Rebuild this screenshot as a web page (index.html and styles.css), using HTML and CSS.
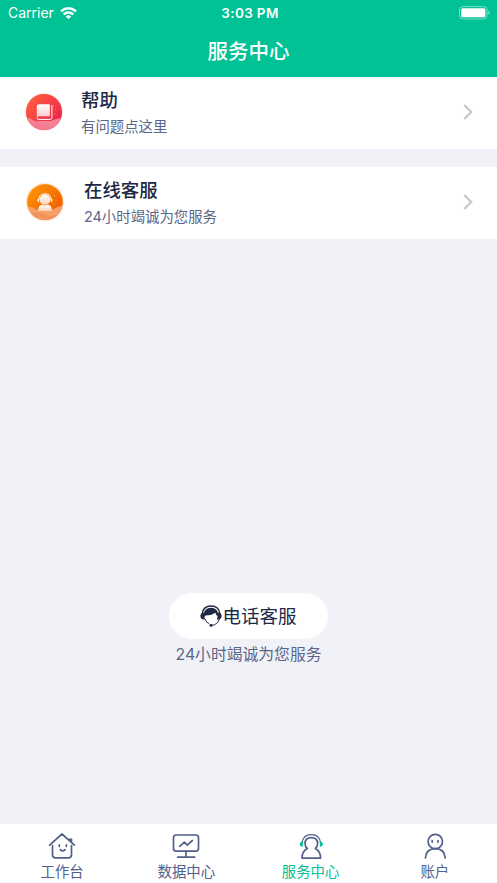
FILE: index.html
```html
<!DOCTYPE html>
<html lang="zh-CN">
<head>
<meta charset="utf-8">
<title>服务中心</title>
<link rel="stylesheet" href="styles.css">
</head>
<body>
<div class="app">
  <header class="header">
    <div class="status">
      <div class="carrier"><span>Carrier</span>
        <svg class="wifi" viewBox="0 0 17 12"><g fill="none" stroke="#fff" stroke-width="2.4"><path d="M.9 4.400Q8.500-1.900 16.100 4.400"/><path d="M3.600 7.400Q8.500 3.400 13.400 7.400"/></g><path fill="#fff" d="M5.700 9.400Q8.500 7.200 11.300 9.400L8.500 12z"/></svg>
      </div>
      <div class="time">3:03 PM</div>
      <svg class="battery" viewBox="0 0 31 14"><rect x=".5" y=".6" width="27.6" height="12.4" rx="3.4" fill="none" stroke="#fff" stroke-opacity=".45"/><rect x="2.2" y="2.3" width="24.2" height="9" rx="1.6" fill="#fff"/><path d="M29.3 4.7q1.4.5 1.4 2.1t-1.4 2.1z" fill="#fff" opacity=".5"/></svg>
    </div>
    <h1 class="title">服务中心</h1>
  </header>
  <main class="content">
    <section class="row">
      <svg class="badge" viewBox="0 0 40 40">
        <defs><linearGradient id="red" x1="0" y1="0" x2="1" y2="1"><stop offset="0" stop-color="#ff653f"/><stop offset="1" stop-color="#e91747"/></linearGradient><linearGradient id="page" x1="0" y1="0" x2="0" y2="1"><stop offset="0" stop-color="#fff"/><stop offset="1" stop-color="#ffc4cb"/></linearGradient><clipPath id="disc"><circle cx="20" cy="20" r="18"/></clipPath></defs>
        <circle cx="20" cy="20" r="18.5" fill="#ffc1bf"/><circle cx="20" cy="20" r="18" fill="url(#red)"/>
        <path clip-path="url(#disc)" d="M1 26q4-1 7 1.500t6 1.500h13q3-2 11-3v14H1z" fill="#f58295"/><path clip-path="url(#disc)" d="M1 34q9-6 18-2t20-2v10H1z" fill="#f47c90"/>
        <path d="M15 12.200h9.600q1.300 0 1.300 1.200v10.800H14.800q-2 0-2 1.600V14.200q0-2 2.200-2z" fill="url(#page)"/>
        <path d="M13 25.600q0 1.800 1.900 1.800h11.200q1.800 0 1.800-1.700V13.100" fill="none" stroke="#fff" stroke-width="1"/><path d="M14.800 25.700h10.300q1 0 1-1.300" fill="none" stroke="#ef3d55" stroke-width="1"/>
        <g fill="#ffaaa2"><circle cx="29.5" cy="13.800" r=".5"/><circle cx="31" cy="22" r=".6"/><circle cx="8" cy="18" r=".4"/><circle cx="11" cy="10" r=".4"/><circle cx="31.500" cy="17" r=".4"/></g>
      </svg>
      <div class="text"><h2>帮助</h2><p>有问题点这里</p></div>
      <svg class="chevron" viewBox="0 0 10 16"><path d="M1.200 1l7 7-7 7"/></svg>
    </section>
    <section class="row chat">
      <svg class="badge" viewBox="0 0 40 40">
        <defs><linearGradient id="orange" x1="0" y1="0" x2="1" y2="1"><stop offset="0" stop-color="#ff9b00"/><stop offset="1" stop-color="#ee4f00"/></linearGradient><linearGradient id="person" x1="0" y1="0" x2="0" y2="1"><stop offset="0" stop-color="#fff"/><stop offset="1" stop-color="#ffd0b2"/></linearGradient><radialGradient id="glow"><stop offset=".86" stop-color="#ffb984"/><stop offset="1" stop-color="#ffe7d5" stop-opacity="0"/></radialGradient></defs>
        <circle cx="20" cy="20" r="20" fill="url(#glow)"/><circle cx="20" cy="20" r="17.700" fill="url(#orange)"/>
        <path clip-path="url(#disc)" d="M2 25q6-1 9 2.500h17q4-3 10-4v17H2z" fill="#f5a069"/><path clip-path="url(#disc)" d="M2 33q8-5 17-1t19-2v10H2z" fill="#f3935f"/>
        <circle cx="20" cy="17.600" r="5.300" fill="url(#person)"/><path d="M13.300 29v-1.700q0-3.800 3.800-4.500 2.900 1.400 5.800 0 3.800.7 3.800 4.500V29z" fill="url(#person)"/>
        <path d="M13.800 18q0-6.300 6.200-6.300t6.200 6.300" fill="none" stroke="#fff" stroke-width=".9"/><path d="M14.100 16.300v4q-1.700-.3-1.700-2t1.700-2zm11.800 0v4q1.700-.3 1.700-2t-1.700-2z" fill="#fff"/>
        <g fill="#ffc18d"><circle cx="29.500" cy="13.800" r=".5"/><circle cx="29" cy="22" r=".6"/><circle cx="8" cy="18" r=".4"/><circle cx="11" cy="13" r=".4"/><circle cx="31" cy="19" r=".4"/></g>
      </svg>
      <div class="text"><h2>在线客服</h2><p><span class="num">24</span>小时竭诚为您服务</p></div>
      <svg class="chevron" viewBox="0 0 10 16"><path d="M1.200 1l7 7-7 7"/></svg>
    </section>
    <div class="phone">
      <button class="call" type="button">
        <svg class="headset" viewBox="0 0 22 22"><path d="M2.200 9.300C2.200 4 6 1 11 1s8.800 3 8.800 8.300" fill="none" stroke="#202844" stroke-width="1.500"/><path d="M3.800 10.200C3.800 5.700 6.600 2.800 11 2.800s7.200 2.900 7.200 7.400l-1.100 1.100-1.800-3.600C11.800 10.300 8 10 5.400 10.500l-.8 1.500z" fill="#202844"/><path d="M3.700 7.500L5 14.400c-2.900.5-4.600-1-4.600-3.400 0-2 1.200-3.200 3.300-3.500zm14.600 0L17 14.400c2.900.5 4.600-1 4.600-3.400 0-2-1.200-3.200-3.300-3.500z" fill="#202844"/><path d="M5.100 14.100q1 3.300 4 4.500M19.500 13.600q-1.500 5.900-7.800 6.900" fill="none" stroke="#202844" stroke-width="1"/><ellipse cx="11" cy="20.400" rx="1.600" ry="1.300" fill="#202844"/></svg>
        <span>电话客服</span>
      </button>
      <p><span class="num">24</span>小时竭诚为您服务</p>
    </div>
  </main>
  <nav class="tabs">
    <div class="tab"><svg viewBox="0 0 28 28"><path d="M1.600 13.200L14 2l12.400 11.200M23.500 10V7.300h-2M4.500 13.500v9.300q0 3.100 3.100 3.100h12.800q3.100 0 3.100-3.100v-9.300"/><path d="M11.300 12.800v1.500m7-1.500v1.500m-6 3.300q2.300 2.600 4.800 0"/></svg><span>工作台</span></div>
    <div class="tab"><svg viewBox="0 0 28 28"><rect x="1.500" y="3" width="25" height="16.200" rx="2.600"/><path d="M14 19.200v5.900M5.700 25.100h17M7.700 14.400l4.600-4.200 3 2.900 5-4.600"/></svg><span>数据中心</span></div>
    <div class="tab active"><svg viewBox="0 0 28 28"><path d="M10.300 16.500q-2.300-1.800-2.300-4.900 0-6 6.300-6t6.300 6q0 3.100-2.300 4.900 5.300 3 5.300 9.600H5q0-6.600 5.300-9.600z"/><path stroke-width="1.200" d="M4.900 11.200Q6 2.600 14.300 2.600t9.400 8.600"/><path class="ear" d="M5.800 9.600v5.200q-3-.3-3-2.600t3-2.600zm17 0v5.200q3-.3 3-2.600t-3-2.600z"/></svg><span>服务中心</span></div>
    <div class="tab"><svg viewBox="0 0 28 28"><circle cx="14.300" cy="9.500" r="7.200"/><path d="M4.400 26Q5 16.700 14.300 16.700T24.200 26M11.200 8.500v1.600m5.800-1.600v1.600"/></svg><span>账户</span></div>
  </nav>
</div>
</body>
</html>
```
FILE: styles.css
```css
* { box-sizing: border-box; }
body { margin: 0; font-family: "Noto Sans CJK SC", sans-serif; color: #202844; }
h1, h2, p { margin: 0; }
svg { display: block; flex: none; }
.app { height: 883px; display: flex; flex-direction: column; background: #f0f2f8; }
.header { height: 77px; background: #00c295; color: #fff; }
.status { height: 26px; padding: 0 7px 0 8px; display: grid; grid-template-columns: 1fr auto 1fr; align-items: center; font: 14px/26px Inter, sans-serif; }
.carrier { display: flex; align-items: center; gap: 6px; }
.wifi { width: 17px; height: 12px; }
.time { font-weight: 600; font-size: 13.500px; letter-spacing: .35px; padding-left: 2px; }
.battery { width: 31px; height: 14px; justify-self: end; }
.title { font-size: 20.500px; line-height: 48px; font-weight: 500; text-align: center; }
.content { flex: 1; display: flex; flex-direction: column; gap: 18px; }
.row { height: 72px; flex: none; padding: 0 24px 2px 23.500px; display: flex; align-items: center; background: #fff; }
.badge { width: 40px; height: 40px; margin-top: -1px; }
.chat .badge { margin-left: 1.500px; margin-top: 0; }
.text { flex: 1; padding-left: 17.500px; }
.chat .text { padding-left: 19px; }
.text h2 { font-size: 18.400px; line-height: 27px; font-weight: 500; }
.text p { font-size: 14.400px; line-height: 25px; color: #5a6688; }
.num { font-family: Inter, sans-serif; }
.chevron { width: 10px; height: 16px; fill: none; stroke: #c7c7cc; stroke-width: 2.300; }
.phone { margin-top: auto; margin-bottom: 155px; display: flex; flex-direction: column; align-items: center; }
.call { width: 159px; height: 46px; padding: 0; border: 0; border-radius: 23px; background: #fff; color: #202844; display: flex; align-items: center; justify-content: center; font: 18.500px/44px "Noto Sans CJK SC", sans-serif; }
.call span { padding-bottom: 2px; }
.headset { width: 22px; height: 22px; margin-top: -1px; }
.phone p { font-size: 15.800px; line-height: 29px; color: #5a6688; }
.tabs { height: 59px; background: #fff; display: grid; grid-template-columns: repeat(4, 1fr); }
.tab { display: flex; flex-direction: column; align-items: center; padding-top: 8px; font-size: 14.400px; line-height: 22px; color: #52608a; }
.tab svg { width: 28px; height: 28px; fill: none; stroke: #52608a; stroke-width: 1.700; stroke-linecap: round; stroke-linejoin: round; }
.active { color: #00c295; }
.tab .ear { fill: #00c295; stroke: none; }
```
